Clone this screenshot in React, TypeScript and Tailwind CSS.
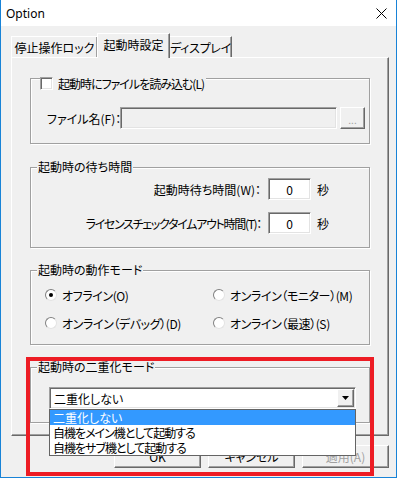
import type { ReactNode } from 'react';

const sunken =
  'border border-t-[#a0a0a0] border-l-[#a0a0a0] border-b-white border-r-white shadow-[inset_1px_1px_0_#696969,inset_-1px_-1px_0_#e3e3e3]';
const raised =
  'border border-t-white border-l-white border-b-[#696969] border-r-[#696969] shadow-[inset_-1px_-1px_0_#a0a0a0]';

function Group({ title, className, children }: { title?: ReactNode; className: string; children?: ReactNode }) {
  return (
    <div className={`relative w-[340px] border border-[#a0a0a0] shadow-[inset_1px_1px_0_#fff,1px_1px_0_#fff] ${className}`}>
      {title && (
        <div className="absolute left-[6px] top-[-8px] h-[14px] whitespace-nowrap bg-[#f0f0f0] px-[1px] leading-[14px]">
          {title}
        </div>
      )}
      {children}
    </div>
  );
}

function Radio({ checked, label }: { checked?: boolean; label: string }) {
  return (
    <div className="flex h-[16px] items-center gap-[5px]">
      <div className="flex h-[12px] w-[12px] items-center justify-center rounded-full border border-[#808080] border-b-[#e3e3e3] border-r-[#e3e3e3] bg-white">
        {checked && <div className="h-[4px] w-[4px] rounded-full bg-black" />}
      </div>
      <span className="whitespace-nowrap tracking-[-0.4px]">{label}</span>
    </div>
  );
}

export default function App() {
  return (
    <div className="relative h-[481px] w-[399px] bg-white font-['Noto_Sans_CJK_JP',sans-serif] text-[12px] leading-[15px] text-black [font-feature-settings:'palt']">
      <div className="flex h-[478px] w-[397px] flex-col border-x border-b border-[#1883d7] bg-[#f0f0f0]">
        {/* title bar */}
        <div className="flex h-[26px] shrink-0 items-center justify-between bg-white pl-[5px] pr-[9px]">
          <span className="font-['Noto_Sans',sans-serif] text-[12px]">Option</span>
          <svg width="11" height="11" viewBox="0 0 11 11">
            <path d="M0.5 0.5 L10.5 10.5 M10.5 0.5 L0.5 10.5" stroke="#000" strokeWidth="1" />
          </svg>
        </div>

        {/* tabs */}
        <div className="relative z-10 ml-[10px] mt-[7px] flex h-[24px] items-end whitespace-nowrap">
          <div className="flex h-[21px] w-[86px] items-center justify-center border-l border-t border-white shadow-[inset_-1px_0_0_#a0a0a0]">
            停止操作ロック
          </div>
          <div className="-mb-px flex h-[25px] w-[73px] items-center justify-center border-l border-r border-t border-white border-r-[#696969] bg-[#f0f0f0] pb-[3px] shadow-[inset_-1px_0_0_#a0a0a0]">
            起動時設定
          </div>
          <div className="flex h-[21px] w-[62px] items-center justify-center border-r border-t border-white border-r-[#696969] tracking-[-0.3px] shadow-[inset_-1px_0_0_#a0a0a0]">
            ディスプレイ
          </div>
        </div>

        {/* panel */}
        <div className="ml-[10px] h-[379px] w-[378px] border border-white border-b-[#696969] border-r-[#696969] pl-[18px] pt-[20px] shadow-[inset_-1px_-1px_0_#a0a0a0]">
          <Group className="h-[66px] pl-[16px] pt-[28px]">
            <div className="absolute left-[9px] top-[-2px] flex h-[13px] items-center gap-[5px] bg-[#f0f0f0] pr-[2px]">
              <div className={`h-[13px] w-[13px] bg-white ${sunken}`} />
              <span className="whitespace-nowrap tracking-[-1px]">起動時にファイルを読み込む(L)</span>
            </div>
            <div className="flex h-[22px] items-center">
              <span className="w-[73px] whitespace-nowrap">ファイル名(F)：</span>
              <div className={`h-[22px] w-[217px] bg-[#f0f0f0] ${sunken}`} />
              <div className={`ml-[3px] flex h-[22px] w-[25px] items-center justify-center bg-[#f0f0f0] pt-[3px] text-[10px] text-[#a0a0a0] ${raised}`}>
                ...
              </div>
            </div>
          </Group>

          <Group title="起動時の待ち時間" className="mt-[23px] h-[81px] pt-[10px]">
            <div className="flex h-[22px] items-center">
              <span className="w-[230px] whitespace-nowrap text-right">起動時待ち時間(W)：</span>
              <div className={`ml-[7px] flex h-[22px] w-[43px] items-center justify-center bg-white ${sunken}`}>0</div>
              <span className="ml-[6px]">秒</span>
            </div>
            <div className="mt-[12px] flex h-[22px] items-center">
              <span className="w-[230px] whitespace-nowrap text-right tracking-[-1.3px]">
                ライセンスチェックタイムアウト時間(T)：
              </span>
              <div className={`ml-[7px] flex h-[22px] w-[43px] items-center justify-center bg-white ${sunken}`}>0</div>
              <span className="ml-[6px]">秒</span>
            </div>
          </Group>

          <Group title="起動時の動作モード" className="mt-[22px] h-[75px] pl-[14px] pt-[16px]">
            <div className="grid grid-cols-[168px_1fr] gap-y-[12px]">
              <Radio checked label="オフライン(O)" />
              <Radio label="オンライン（モニター）(M)" />
              <Radio label="オンライン（デバッグ）(D)" />
              <Radio label="オンライン（最速）(S)" />
            </div>
          </Group>

          <Group title="起動時の二重化モード" className="z-20 mt-[22px] h-[56px] pl-[18px] pt-[19px]">
            <div className="relative w-[307px]">
              <div className={`flex h-[22px] w-[307px] items-center justify-between bg-white pl-[4px] pr-[1px] ${sunken}`}>
                <span>二重化しない</span>
                <div className={`flex h-[18px] w-[17px] items-center justify-center bg-[#f0f0f0] ${raised}`}>
                  <svg width="7" height="4" viewBox="0 0 7 4">
                    <polygon points="0,0 7,0 3.5,4" fill="#000" />
                  </svg>
                </div>
              </div>
              <div className="absolute left-0 top-full w-[307px] border border-[#646464] bg-white tracking-[-1px]">
                <div className="h-[15px] bg-[#3399ff] px-[3px] leading-[15px] tracking-normal text-white">二重化しない</div>
                <div className="h-[15px] px-[3px] leading-[15px]">自機をメイン機として起動する</div>
                <div className="h-[15px] px-[3px] leading-[15px]">自機をサブ機として起動する</div>
              </div>
            </div>
          </Group>
        </div>

        {/* buttons */}
        <div className="ml-[10px] mt-[9px] flex w-[378px] justify-end gap-[7px]">
          <div className={`flex h-[23px] w-[87px] items-center justify-center bg-[#f0f0f0] ${raised}`}>OK</div>
          <div className={`flex h-[23px] w-[87px] items-center justify-center bg-[#f0f0f0] ${raised}`}>キャンセル</div>
          <div className={`flex h-[23px] w-[87px] items-center justify-center bg-[#f0f0f0] text-[#a0a0a0] ${raised}`}>
            適用(A)
          </div>
        </div>
      </div>

      {/* annotation */}
      <div className="pointer-events-none absolute left-[26px] top-[357px] z-30 h-[119px] w-[348px] border-4 border-[#ed1c24]" />
    </div>
  );
}
